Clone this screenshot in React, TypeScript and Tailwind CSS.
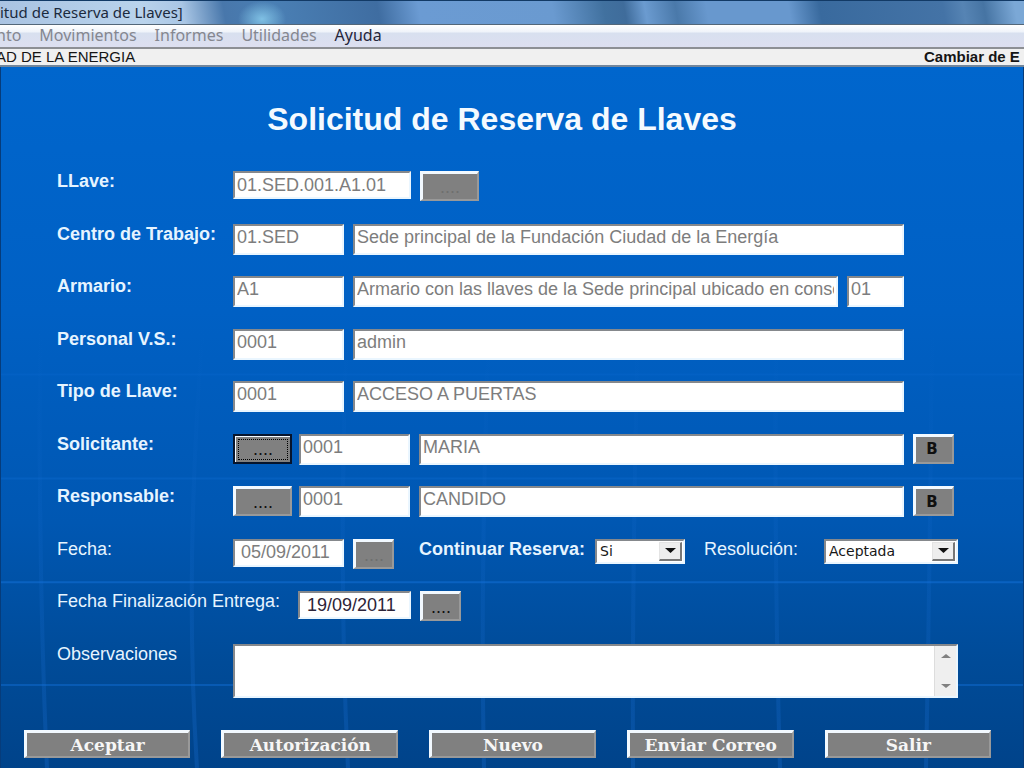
import type { ReactNode } from "react";

const arial = "font-['Liberation_Sans',Arial,sans-serif]";
const segoe = "font-['Noto_Sans','Open_Sans',sans-serif]";
const sunken = "border-2 border-t-[#85888c] border-l-[#85888c] border-r-[#eaf6ff] border-b-[#eaf6ff]";
const raised = "border-t-[3px] border-l-[3px] border-r-2 border-b-2 border-t-[#f2f9ff] border-l-[#f2f9ff] border-r-[#999999] border-b-[#999999] bg-[#808080]";

function Backdrop() {
  return (
    <svg aria-hidden="true" className="absolute inset-0 -z-10 h-full w-full" viewBox="0 0 1024 702" preserveAspectRatio="none">
      <defs>
        <linearGradient id="sky" x1="0" y1="0" x2="0" y2="1">
          <stop offset="0" stopColor="#0066cd" />
          <stop offset="0.35" stopColor="#0060c4" />
          <stop offset="0.65" stopColor="#0057b2" />
          <stop offset="0.85" stopColor="#004b98" />
          <stop offset="1" stopColor="#00438a" />
        </linearGradient>
        <linearGradient id="beam" gradientUnits="userSpaceOnUse" x1="0" y1="260" x2="0" y2="702">
          <stop offset="0" stopColor="#1a6fd4" stopOpacity="0" />
          <stop offset="1" stopColor="#1a6fd4" stopOpacity="0.3" />
        </linearGradient>
      </defs>
      <rect width="1024" height="702" fill="url(#sky)" />
      <g fill="none" stroke="url(#beam)" strokeWidth="4">
        <path d="M40 260 Q38 500 47 702" />
        <path d="M203 260 Q184 500 197 702" />
        <path d="M347 260 Q338 500 348 702" />
        <path d="M489 260 Q480 500 484 702" />
        <path d="M638 260 Q632 500 633 702" />
        <path d="M776 260 Q774 500 780 702" />
        <path d="M932 260 Q930 500 926 702" />
      </g>
      <g stroke="#1370d8" strokeWidth="2">
        <path d="M0 308H1024" opacity="0.2" />
        <path d="M0 412H1024" opacity="0.3" />
        <path d="M0 516H1024" opacity="0.55" />
        <path d="M0 619H1024" opacity="0.45" />
      </g>
      <path d="M0.500 0V702M1023.500 0V702" stroke="#063c7a" />
    </svg>
  );
}

function Field({
  id,
  value,
  label,
  className,
  pad = "pl-[2px]",
  short = false,
  active = false,
}: {
  id: string;
  value: string;
  label?: string;
  className: string;
  pad?: string;
  short?: boolean;
  active?: boolean;
}) {
  return (
    <input
      id={id}
      aria-label={label}
      defaultValue={value}
      readOnly={!active}
      className={`${sunken} ${arial} ${pad} min-w-0 bg-white pr-[2px] text-[18px] outline-none ${short ? "h-7" : "h-[31px] pb-1"} ${active ? "text-[#2c2438]" : "text-[#7d7d7d]"} ${className}`}
    />
  );
}

function Lookup({ label, wide = false, disabled = false, focused = false }: { label: string; wide?: boolean; disabled?: boolean; focused?: boolean }) {
  return (
    <button
      type="button"
      aria-label={label}
      disabled={disabled}
      className={`h-[30px] shrink-0 ${wide ? "w-[59px]" : "w-[41px]"} ${raised} ${focused ? "p-[2px] outline-2 -outline-offset-2 outline-[#06142c]" : ""}`}
    >
      <span className={`flex h-full items-end justify-center ${focused ? "border border-dotted border-black" : "pb-[2px]"}`}>
        <span className={`${arial} text-[18px] leading-5 ${disabled ? "text-[#6f6f6f]" : "text-[#101010]"}`}>....</span>
      </span>
    </button>
  );
}

function Person({ label }: { label: string }) {
  return (
    <button type="button" aria-label={label} className={`h-[30px] w-[41px] shrink-0 ${raised} pr-1 font-['DejaVu_Sans',sans-serif] text-[15px] leading-5 font-bold text-[#101010]`}>
      B
    </button>
  );
}

function Row({ id, label, bold = false, labelWidth = "w-[176px]", children }: { id: string; label: string; bold?: boolean; labelWidth?: string; children: ReactNode }) {
  return (
    <div className="flex items-start">
      <label htmlFor={id} className={`${labelWidth} ${bold ? "font-bold" : ""} shrink-0 text-[18px] leading-5 whitespace-nowrap text-[#e6f4ff]`}>
        {label}
      </label>
      {children}
    </div>
  );
}

function Choice({ id, options, className }: { id: string; options: string[]; className: string }) {
  return (
    <div className={`relative h-[25px] shrink-0 ${className}`}>
      <select id={id} className={`${sunken} h-full w-full appearance-none bg-white pl-[3px] font-['DejaVu_Sans',sans-serif] text-sm leading-5 text-[#181818] outline-none`}>
        {options.map((o) => (
          <option key={o}>{o}</option>
        ))}
      </select>
      <span className="pointer-events-none absolute top-[3px] right-[3px] bottom-[3px] flex w-[23px] items-center justify-center border border-r-2 border-b-2 border-[#e4e4e4] border-r-[#777777] border-b-[#777777] bg-[#eeeeee]">
        <svg width="11" height="5" viewBox="0 0 11 5">
          <path d="M0 0H11L5.500 5Z" fill="#111111" />
        </svg>
      </span>
    </div>
  );
}

export default function App() {
  return (
    <div className={`${arial} flex min-h-screen flex-col overflow-hidden`}>
      <header>
        <div
          className={`${segoe} flex h-[25px] items-center border-t border-b border-t-[#123a66] border-b-[#536779] bg-[radial-gradient(24px_18px_at_262px_18px,#7fc0e4,transparent),linear-gradient(80deg,#a9c3e2_0%,#b9d3ec_14%,#a9c6e5_18%,#4877ab_22%,#4a7fb4_27%,#3f6da1_37%,#6b9bd3_41%,#6a9ad0_54%,#41719f_59%,#3f6c9b_61%,#6b9bd0_63%,#4a79aa_66%,#6898ce_69%,#6898ce_77%,#396a9e_80%,#4473a6_92%,#5684b4_94%,#4674a3_96%,#7ba8d6_99%)] text-[15px] text-[#1b2a3d]`}
        >
          <span className="whitespace-nowrap">itud de Reserva de Llaves]</span>
        </div>
        <nav className={`${segoe} flex h-6 items-start gap-[18px] border-b-2 border-[#8d8f94] bg-[linear-gradient(#ffffff_0%,#f0f4fa_30%,#d8e0ef_38%,#dddff0_100%)] text-base leading-5 text-[#858790]`}>
          <a href="#mantenimiento" className="-ml-1">nto</a>
          <a href="#movimientos">Movimientos</a>
          <a href="#informes">Informes</a>
          <a href="#utilidades">Utilidades</a>
          <a href="#ayuda" className="text-[#26263a]">Ayuda</a>
        </nav>
        <div className="flex h-[18px] items-center justify-between overflow-hidden border-b-2 border-[#73869b] bg-[#f0f0f0] text-[15px] leading-4 whitespace-nowrap text-[#151515]">
          <span className="-ml-1">AD DE LA ENERGIA</span>
          <a href="#empresa" className="w-[100px] shrink-0 overflow-hidden font-bold">Cambiar de E</a>
        </div>
      </header>

      <main className="relative isolate flex flex-1 flex-col">
        <Backdrop />
        <h1 className="pt-8 pr-5 text-center text-[32px] leading-10 font-bold text-[#f4faff]">Solicitud de Reserva de Llaves</h1>

        <form className="mt-8 grid flex-1 grid-rows-[repeat(9,1fr)_54px] pr-[66px] pl-[57px]">
          <Row id="llave" label="LLave:" bold>
            <Field id="llave" value="01.SED.001.A1.01" short className="mr-[9px] w-[178px]" />
            <Lookup label="Buscar llave" wide disabled />
          </Row>
          <Row id="centro" label="Centro de Trabajo:" bold>
            <Field id="centro" value="01.SED" className="mr-[9px] w-[111px]" />
            <Field id="centro-desc" label="Nombre del centro" value="Sede principal de la Fundación Ciudad de la Energía" className="mr-[54px] flex-1" />
          </Row>
          <Row id="armario" label="Armario:" bold>
            <Field id="armario" value="A1" className="mr-[9px] w-[111px]" />
            <Field id="armario-desc" label="Descripción del armario" value="Armario con las llaves de la Sede principal ubicado en conserjería" className="mr-[9px] flex-1" />
            <Field id="armario-pos" label="Posición" value="01" className="mr-[54px] w-[57px]" />
          </Row>
          <Row id="personal" label="Personal V.S.:" bold>
            <Field id="personal" value="0001" className="mr-[9px] w-[111px]" />
            <Field id="personal-desc" label="Nombre del personal" value="admin" className="mr-[54px] flex-1" />
          </Row>
          <Row id="tipo" label="Tipo de Llave:" bold>
            <Field id="tipo" value="0001" className="mr-[9px] w-[111px]" />
            <Field id="tipo-desc" label="Descripción del tipo" value="ACCESO A PUERTAS" className="mr-[54px] flex-1" />
          </Row>
          <Row id="solicitante" label="Solicitante:" bold>
            <Lookup label="Buscar solicitante" wide focused />
            <Field id="solicitante" value="0001" className="mr-[9px] ml-[7px] w-[111px]" />
            <Field id="solicitante-desc" label="Nombre del solicitante" value="MARIA" className="mr-[9px] flex-1" />
            <Person label="B solicitante" />
            <span className="w-1 shrink-0" />
          </Row>
          <Row id="responsable" label="Responsable:" bold>
            <Lookup label="Buscar responsable" wide />
            <Field id="responsable" value="0001" className="mr-[9px] ml-[7px] w-[111px]" />
            <Field id="responsable-desc" label="Nombre del responsable" value="CANDIDO" className="mr-[9px] flex-1" />
            <Person label="B responsable" />
            <span className="w-1 shrink-0" />
          </Row>
          <Row id="fecha" label="Fecha:">
            <Field id="fecha" value="05/09/2011" short pad="pl-[6px]" className="mr-[9px] w-[111px]" />
            <Lookup label="Elegir fecha" disabled />
            <label htmlFor="continuar" className="ml-[25px] w-[176px] shrink-0 text-[18px] leading-5 font-bold whitespace-nowrap text-[#e6f4ff]">
              Continuar Reserva:
            </label>
            <Choice id="continuar" options={["Si", "No"]} className="w-[90px]" />
            <label htmlFor="resolucion" className="mr-auto pl-[19px] text-[18px] leading-5 whitespace-nowrap text-[#e6f4ff]">
              Resolución:
            </label>
            <Choice id="resolucion" options={["Aceptada", "Denegada"]} className="w-[134px]" />
          </Row>
          <Row id="fin" label="Fecha Finalización Entrega:" labelWidth="w-[241px]">
            <Field id="fin" value="19/09/2011" short active pad="pl-[7px]" className="mr-[9px] w-[113px]" />
            <Lookup label="Elegir fecha de finalización" />
          </Row>
          <Row id="observaciones" label="Observaciones">
            <div className={`${sunken} flex h-[54px] flex-1 bg-white`}>
              <textarea id="observaciones" className={`${arial} min-w-0 flex-1 resize-none overflow-hidden px-1 text-[18px] outline-none`} />
              <div className="flex w-[22px] flex-col items-center justify-between border-l border-[#dddddd] bg-[#efefef] py-2">
                <svg width="10" height="4" viewBox="0 0 10 4">
                  <path d="M0 4L5 0L10 4Z" fill="#808080" />
                </svg>
                <svg width="10" height="4" viewBox="0 0 10 4">
                  <path d="M0 0H10L5 4Z" fill="#808080" />
                </svg>
              </div>
            </div>
          </Row>
        </form>

        <footer className="mt-8 mb-[10px] grid grid-cols-[166fr_177fr_166fr_167fr_166fr] gap-[31px] pr-[33px] pl-6">
          {["Aceptar", "Autorización", "Nuevo", "Enviar Correo", "Salir"].map((name) => (
            <button key={name} type="button" className={`${raised} h-7 font-['DejaVu_Serif',serif] text-[17px] leading-5 font-bold whitespace-nowrap text-[#f6f6f6]`}>
              {name}
            </button>
          ))}
        </footer>
      </main>
    </div>
  );
}
